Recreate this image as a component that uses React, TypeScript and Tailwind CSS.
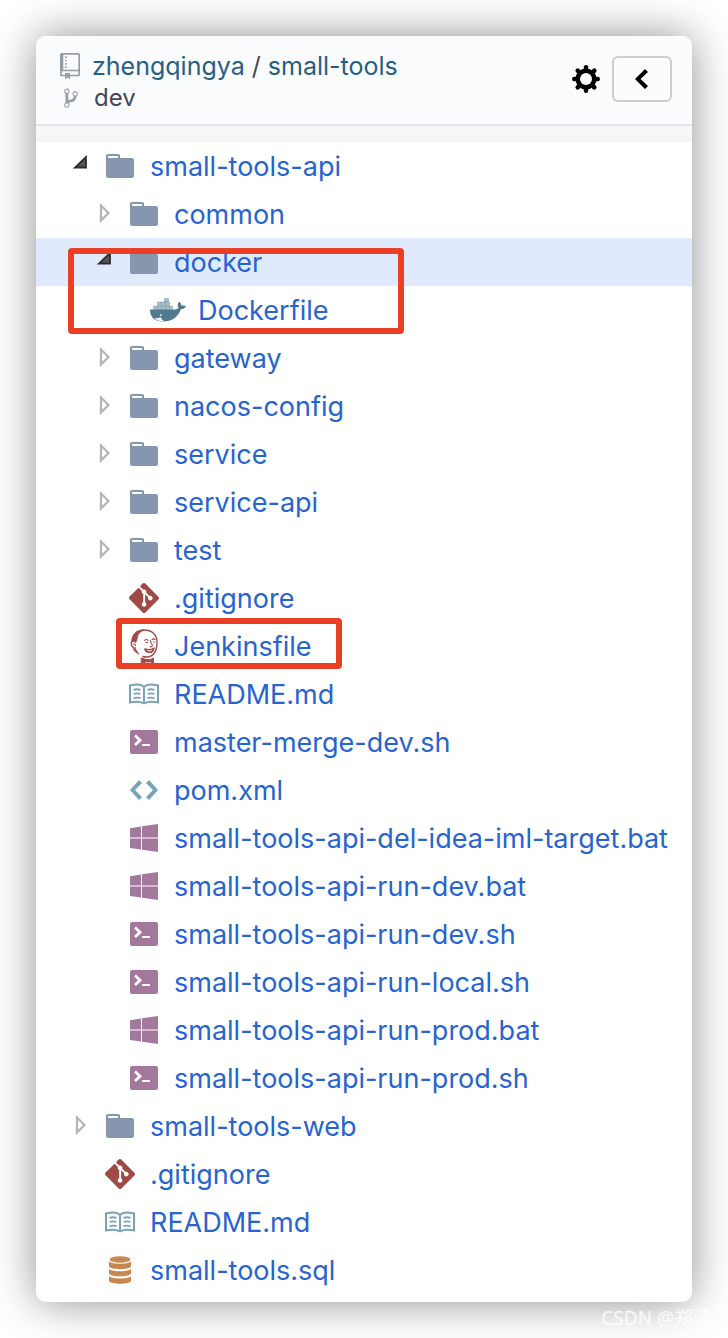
import type { ReactNode } from "react";
import { SiGit } from "react-icons/si";

type Kind =
  | "folder" | "docker" | "git" | "jenkins" | "book" | "terminal" | "code" | "windows" | "database";

type Node = {
  name: string;
  kind: Kind;
  depth: 0 | 1 | 2;
  state?: "open" | "closed";
  selected?: boolean;
  mark?: string;
};

const nodes: Node[] = [
  { name: "small-tools-api", kind: "folder", depth: 0, state: "open" },
  { name: "common", kind: "folder", depth: 1, state: "closed" },
  { name: "docker", kind: "folder", depth: 1, state: "open", selected: true, mark: "left-8 top-2.5 w-[336px] h-[86px]" },
  { name: "Dockerfile", kind: "docker", depth: 2 },
  { name: "gateway", kind: "folder", depth: 1, state: "closed" },
  { name: "nacos-config", kind: "folder", depth: 1, state: "closed" },
  { name: "service", kind: "folder", depth: 1, state: "closed" },
  { name: "service-api", kind: "folder", depth: 1, state: "closed" },
  { name: "test", kind: "folder", depth: 1, state: "closed" },
  { name: ".gitignore", kind: "git", depth: 1 },
  { name: "Jenkinsfile", kind: "jenkins", depth: 1, mark: "left-20 -top-1 w-[226px] h-[51px]" },
  { name: "README.md", kind: "book", depth: 1 },
  { name: "master-merge-dev.sh", kind: "terminal", depth: 1 },
  { name: "pom.xml", kind: "code", depth: 1 },
  { name: "small-tools-api-del-idea-iml-target.bat", kind: "windows", depth: 1 },
  { name: "small-tools-api-run-dev.bat", kind: "windows", depth: 1 },
  { name: "small-tools-api-run-dev.sh", kind: "terminal", depth: 1 },
  { name: "small-tools-api-run-local.sh", kind: "terminal", depth: 1 },
  { name: "small-tools-api-run-prod.bat", kind: "windows", depth: 1 },
  { name: "small-tools-api-run-prod.sh", kind: "terminal", depth: 1 },
  { name: "small-tools-web", kind: "folder", depth: 0, state: "closed" },
  { name: ".gitignore", kind: "git", depth: 0 },
  { name: "README.md", kind: "book", depth: 0 },
  { name: "small-tools.sql", kind: "database", depth: 0 },
];

const icons: Record<Kind, ReactNode> = {
  folder: (
    <svg viewBox="0 0 14 16" className="h-8 w-7 fill-[#8696af]">
      <path d="M13 4H7V3c0-.66-.31-1-1-1H1c-.55 0-1 .45-1 1v10c0 .55.45 1 1 1h12c.55 0 1-.45 1-1V5c0-.55-.45-1-1-1zM6 4H1V3h5v1z" />
    </svg>
  ),
  docker: (
    <svg viewBox="0 0 36 26" className="h-[26px] w-9 shrink-0">
      <g fill="#a9bcc7" stroke="#8da7b5" strokeWidth="0.6">
        <path d="M3.5 9h4v3.5h-4zM7.5 9h4v3.5h-4zM11.5 9h4v3.5h-4zM15.5 9h4v3.5h-4zM19.5 9h3v3.5h-3zM7.5 5h4v4h-4zM11.5 5h4v4h-4zM15.5 5h4v4h-4zM14.500 1.500h4v3.500h-4z" />
      </g>
      <path fill="#527a8f" d="M0 12.500h24.500c1.800 0 3.200-.6 4-1.500-1.400-1.900-1-4.600.5-6.200 1.700 1 2.500 2.500 2.500 4 1.500-.5 3.100-.4 4.500.4-.9 1.900-2.600 2.800-5 2.800C28.300 20 22 24.500 13 24.500 4 24.500 0 20 0 12.500z" />
      <path fill="#e8f0f3" d="M4 21c2.500.5 5 .2 7-.9.2 1.800 1.500 3.200 3.500 4.100-4.500.4-8-.6-10.500-3.200z" />
      <circle cx="11" cy="18" r="1" fill="#d7e3e8" />
    </svg>
  ),
  git: <SiGit className="size-[30px] shrink-0 text-[#a04a46]" />,
  jenkins: (
    <svg viewBox="-1 0 30 34" className="h-[34px] w-[30px] shrink-0" fill="none" stroke="#a04a46" strokeLinecap="round" strokeLinejoin="round">
      <path strokeWidth="1.400" d="M7 23.500c-2.500-1.500-3.500-3.200-4-5.500-2-1-2.500-4-1-5.500C2 6.500 6.500 1 14 1c8 0 13 4.500 13 12 0 5-.5 8.500-3 11.500-2.500 3-7 4-11 3" />
      <path fill="#a04a46" strokeWidth=".8" d="M2 13c0-4.500 2-8.500 6-10.500 2-1 4-1.400 6-1.300-3 1-6 3-6.500 6.500-.3 2-.5 4-2 6-.8-1.600-2-1.800-3.500-.7z" />
      <path strokeWidth="1.100" d="M3.300 15c1.200-.5 2 .3 2 1.500M5 18c.2 3 1.500 5 3.500 7M14.500 11.500c1-1.200 2.500-1.200 3.500-.2M22 10.500c1-.8 2-.8 3 0M16 13.500h1.500M23.500 13h1M20.500 11.500c-.2 2 .6 2.500 1.800 4.500.5 1.700-.8 2-2.300 1.600" />
      <path fill="#fff" strokeWidth="1.600" d="M15 20c3 1 6.500 1 9-1-.5 3-2.500 4.500-5 4.300-2-.1-3.500-1-4-3.300z" />
      <path fill="#a04a46" strokeWidth="1" d="M11.500 29l4.500 1.500v2.500l-4.500 1zM17 30.500h2.500V33H17zM20.500 30.500l3-1.500v5l-3-1z" />
    </svg>
  ),
  book: (
    <svg viewBox="0 0 30 22" className="h-[22px] w-[30px] shrink-0" fill="none" stroke="#78a2b5" strokeWidth="2">
      <path d="M15 3.500C12 1.500 6 1 1 2.500v17c5-1 10-1 14 .8 4-1.800 9-1.800 14-.8v-17C24 1 18 1.500 15 3.500zM15 3.500v17" />
      <path strokeWidth="1.800" d="M4.500 6.800c2.500-.8 4.500-.8 7 0M4.500 11c2.500-.8 4.500-.8 7 0M4.500 15.200c2.500-.8 4.500-.8 7 0M18.500 6.800c2.500-.8 4.500-.8 7 0M18.500 11c2.500-.8 4.500-.8 7 0M18.500 15.200c2.500-.8 4.500-.8 7 0" />
    </svg>
  ),
  terminal: (
    <svg viewBox="0 0 28 24" className="h-6 w-7">
      <rect width="28" height="24" rx="2" fill="#a3789c" />
      <path d="M5 5.500l5 4.700-5 4.700" fill="none" stroke="#fff" strokeWidth="2.800" />
      <path d="M12 14h8v2h-8z" fill="#fff" />
    </svg>
  ),
  code: (
    <svg viewBox="0 0 14 16" className="h-8 w-7 fill-[#78a2b5]">
      <path d="M9.500 3L8 4.500 11.500 8 8 11.500 9.500 13 14 8 9.500 3zm-5 0L0 8l4.500 5L6 11.500 2.500 8 6 4.500 4.500 3z" />
    </svg>
  ),
  windows: (
    <svg viewBox="0 0 28 28" className="size-7 fill-[#a3789c]">
      <path d="M0 4.200L11 2.500v11H0zM12 2.300L28 0v13.500H12zM0 14.500h11v11L0 24zM12 14.500h16V28l-16-2.300z" />
    </svg>
  ),
  database: (
    <svg viewBox="0 0 22 28" className="h-7 w-[22px] fill-[#c98750]">
      <ellipse cx="11" cy="3.500" rx="10.500" ry="3.200" />
      <path d="M0 5.500c3 3 19 3 22 0v5c-2 3.500-20 3.500-22 0zM0 13c3 3 19 3 22 0v4.800c-2 3.400-20 3.400-22 0zM0 20.300c3 3 19 3 22 0V25c-2 3.700-20 3.700-22 0z" />
    </svg>
  ),
};

const indent = { 0: "pl-9", 1: "pl-[60px]", 2: "pl-[84px]" };

function Arrow({ state }: { state: "open" | "closed" }) {
  return state === "open" ? (
    <svg viewBox="0 0 16 20" className="h-5 w-4">
      <path d="M14 2v10.500H3z" fill="#555" stroke="#2e2e2e" strokeWidth="1.800" />
    </svg>
  ) : (
    <svg viewBox="0 0 16 20" className="h-5 w-4">
      <path d="M5 2.500v15l7.500-7.500z" fill="none" stroke="#b4b4b4" strokeWidth="2.200" />
    </svg>
  );
}

function Row({ node }: { node: Node }) {
  return (
    <li className={node.selected ? "relative bg-[#dfebfc]" : "relative"}>
      <a href="#" className={`flex h-12 items-center text-[#2864ce] ${indent[node.depth]}`}>
        <span className="flex w-4 shrink-0 justify-center pb-0.5">{node.state && <Arrow state={node.state} />}</span>
        <span className="ml-3 flex w-10 shrink-0 items-center justify-center">{icons[node.kind]}</span>
        <span className="ml-2.5 pt-0.5 whitespace-nowrap">{node.name}</span>
      </a>
      {node.mark && (
        <span className={`pointer-events-none absolute z-10 rounded-sm border-6 border-[#ea3f24] ${node.mark}`} />
      )}
    </li>
  );
}

export default function App() {
  return (
    <div className="relative bg-white p-9 font-['Inter','Noto_Sans_CJK_SC',sans-serif] text-[27px] leading-8">
      <main className="overflow-hidden rounded-[10px] bg-white pb-2 shadow-[0_0_44px_rgba(0,0,0,0.44)]">
        <header className="flex items-center justify-between border-b-2 border-[#e1e4e8] bg-[#fafbfd] pt-3.5 pr-5 pb-2.5 pl-6 text-[#444659]">
          <div>
            <div className="flex items-center">
              <svg viewBox="0 0 12 16" className="w-5 fill-[#959da5]">
                <path d="M4 9H3V8h1v1zm0-3H3v1h1V6zm0-2H3v1h1V4zm0-2H3v1h1V2zm8-1v12c0 .55-.45 1-1 1H6v2l-1.500-1.500L3 16v-2H1c-.55 0-1-.45-1-1V1c0-.55.45-1 1-1h10c.55 0 1 .45 1 1zm-1 10H1v2h2v-1h3v1h5v-2zm0-10H2v9h9V1z" />
              </svg>
              <h1 className="ml-3 whitespace-nowrap text-[25px]/8">
                <a href="#" className="text-[#265f85]">zhengqingya</a> / <a href="#" className="text-[#265f85]">small-tools</a>
              </h1>
            </div>
            <div className="flex items-center text-2xl/8">
              <svg viewBox="0 0 10 16" className="ml-1 h-[22px] w-3.5 fill-[#959da5]">
                <path d="M10 5c0-1.110-.89-2-2-2a1.993 1.993 0 0 0-1 3.720v.3c-.02.52-.23.98-.63 1.380-.4.4-.86.61-1.380.63-.83.02-1.480.16-2 .45V4.720a1.993 1.993 0 0 0-1-3.720C.88 1 0 1.890 0 3a2 2 0 0 0 1 1.720v6.560c-.59.35-1 .99-1 1.720 0 1.110.89 2 2 2 1.110 0 2-.89 2-2 0-.53-.2-1-.53-1.360.09-.06.48-.41.59-.47.25-.11.56-.17.94-.17 1.050-.05 1.950-.45 2.750-1.250S8.950 7.770 9 6.730h-.02C9.590 6.370 10 5.730 10 5zM2 1.800c.66 0 1.200.55 1.200 1.200 0 .65-.55 1.200-1.200 1.200C1.350 4.200.8 3.650.8 3c0-.65.55-1.200 1.200-1.200zm0 12.410c-.66 0-1.200-.55-1.200-1.200 0-.65.55-1.200 1.200-1.200.65 0 1.200.55 1.200 1.200 0 .65-.55 1.200-1.200 1.200zm6-8c-.66 0-1.200-.55-1.200-1.200 0-.65.55-1.200 1.200-1.200.65 0 1.200.55 1.200 1.200 0 .65-.55 1.200-1.200 1.200z" />
              </svg>
              <span className="ml-4">dev</span>
            </div>
          </div>
          <div className="flex items-center gap-3 pb-1.5 text-black">
            <button type="button" aria-label="Settings">
              <svg viewBox="0 0 28 28" className="size-7">
                <g stroke="currentColor" strokeWidth="4.500" strokeLinecap="round">
                  <path d="M14 2.300v23.400M2.300 14h23.400M5.700 5.700l16.600 16.600M22.300 5.700L5.700 22.300" />
                </g>
                <circle cx="14" cy="14" r="10.500" />
                <circle cx="14" cy="14" r="6" fill="#fafbfd" />
              </svg>
            </button>
            <button type="button" aria-label="Collapse" className="flex h-[46px] w-[60px] items-center justify-center rounded-md border-2 border-[#cccdcf]">
              <svg viewBox="0 0 8 16" className="h-8 w-4 fill-current">
                <path d="M5.500 3L7 4.500 3.250 8 7 11.500 5.500 13l-5-5 5-5z" />
              </svg>
            </button>
          </div>
        </header>
        <ul className="border-t-16 border-[#f6f6f6]">
          {nodes.map((node, i) => (
            <Row key={i} node={node} />
          ))}
        </ul>
      </main>
      <span className="absolute right-4 bottom-1 font-['Noto_Sans','Noto_Sans_CJK_SC',sans-serif] text-[19px]/8 text-white/80">CSDN @郑清</span>
    </div>
  );
}
